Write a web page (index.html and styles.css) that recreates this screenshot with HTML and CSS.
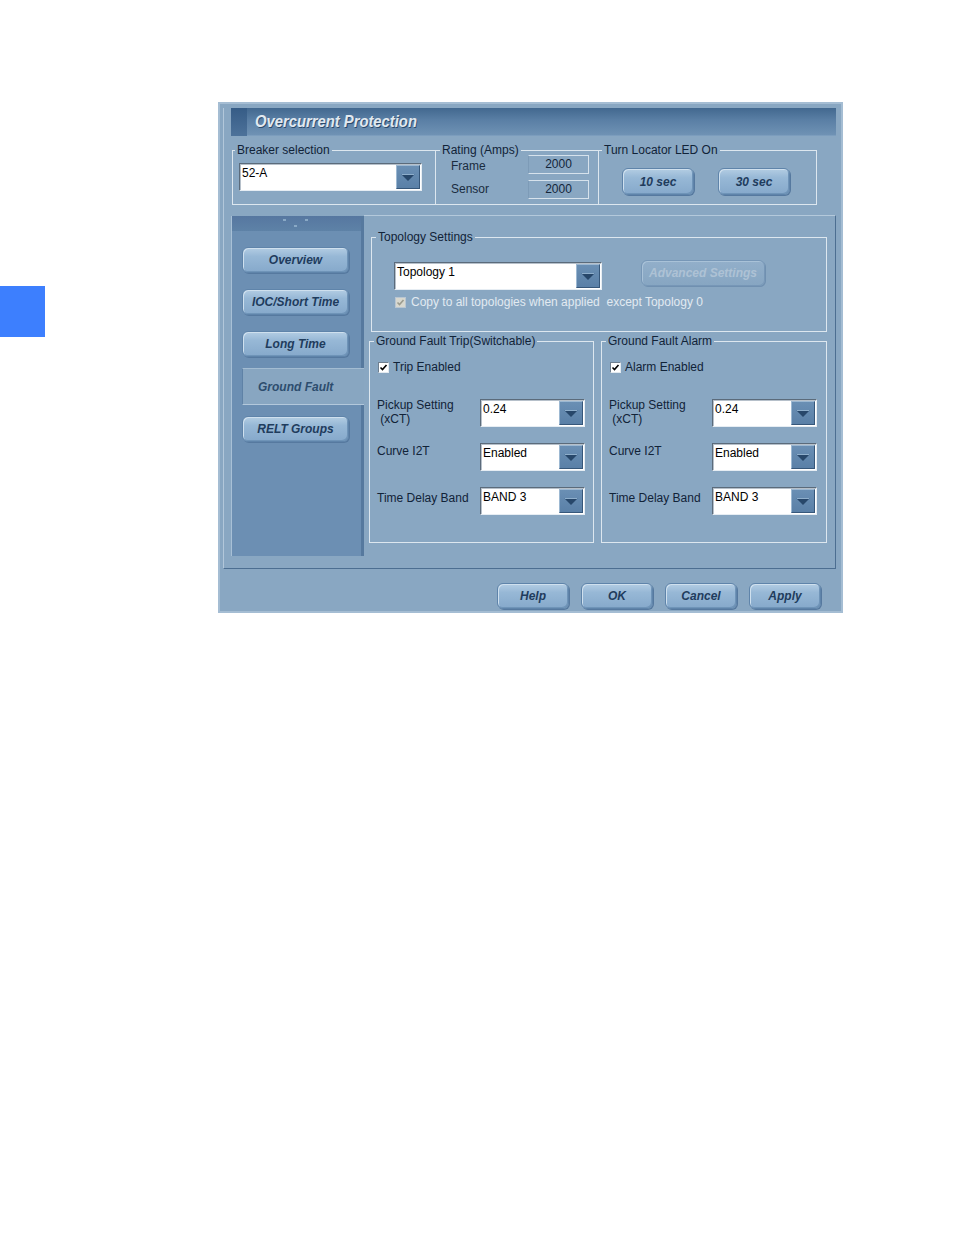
FILE: index.html
```html
<!DOCTYPE html>
<html>
<head>
<meta charset="utf-8">
<title>Overcurrent Protection</title>
<link rel="stylesheet" href="styles.css">
</head>
<body>
<div class="page">
  <div class="side-tab"></div>
  <div class="window">
    <div class="inner">
      <div class="titlebar">
        <span class="title-square"></span>
        <span class="title-text">Overcurrent Protection</span>
      </div>

      <div class="top">
        <fieldset class="grp grp-breaker">
          <legend>Breaker selection</legend>
          <div class="grp-body breaker-body">
            <div class="combo combo-breaker">
              <span class="combo-text">52-A</span>
              <span class="drop"><svg width="22" height="22" viewBox="0 0 22 22"><path d="M4.5 8.5 H17.5 L11 15 Z" fill="#27476a"/><path d="M5 8.5 H17" stroke="#8eaecb" stroke-width="1"/></svg></span>
            </div>
          </div>
        </fieldset>
        <fieldset class="grp grp-rating">
          <legend>Rating (Amps)</legend>
          <div class="grp-body rating-body">
            <span class="rlabel rlabel-1">Frame</span><span class="rvalue">2000</span>
            <span class="rlabel rlabel-2">Sensor</span><span class="rvalue">2000</span>
          </div>
        </fieldset>
        <fieldset class="grp grp-led">
          <legend>Turn Locator LED On</legend>
          <div class="grp-body led-body">
            <button class="btn">10 sec</button>
            <button class="btn">30 sec</button>
          </div>
        </fieldset>
      </div>

      <div class="body">
        <nav class="nav">
          <div class="nav-grip"><svg width="130" height="15" viewBox="0 0 130 15"><rect x="51" y="3" width="3" height="2" fill="#89a9c6"/><rect x="73" y="3" width="3" height="2" fill="#89a9c6"/><rect x="62" y="9" width="3" height="2" fill="#89a9c6"/></svg></div>
          <div class="nav-list">
            <button class="navbtn">Overview</button>
            <button class="navbtn">IOC/Short Time</button>
            <button class="navbtn">Long Time</button>
            <div class="navtab">Ground Fault</div>
            <button class="navbtn">RELT Groups</button>
          </div>
        </nav>

        <div class="content">
          <fieldset class="grp grp-topo">
            <legend>Topology Settings</legend>
            <div class="topo-body">
              <div class="topo-row">
                <div class="combo combo-topo">
                  <span class="combo-text">Topology 1</span>
                  <span class="drop"><svg width="22" height="22" viewBox="0 0 22 22"><path d="M4.5 8.5 H17.5 L11 15 Z" fill="#27476a"/><path d="M5 8.5 H17" stroke="#8eaecb" stroke-width="1"/></svg></span>
                </div>
                <button class="btn btn-adv" disabled>Advanced Settings</button>
              </div>
              <div class="chk chk-disabled">
                <span class="box"><svg width="9" height="9" viewBox="0 0 9 9"><path d="M1.5 4.5 L3.5 6.5 L7.5 2" fill="none" stroke="#9b9b8e" stroke-width="1.6"/></svg></span>
                <span class="chk-label">Copy to all topologies when applied&nbsp; except Topology 0</span>
              </div>
            </div>
          </fieldset>

          <div class="gf-row">
            <fieldset class="grp grp-gf grp-trip">
              <legend>Ground Fault Trip(Switchable)</legend>
              <div class="gf-body">
                <div class="chk">
                  <span class="box"><svg width="9" height="9" viewBox="0 0 9 9"><path d="M1.5 4.5 L3.5 6.5 L7.5 2" fill="none" stroke="#000" stroke-width="1.6"/></svg></span>
                  <span class="chk-label">Trip Enabled</span>
                </div>
                <div class="gf-grid">
                  <span class="gf-label gf-l1">Pickup Setting<br>&nbsp;(xCT)</span>
                  <div class="combo combo-gf"><span class="combo-text">0.24</span><span class="drop"><svg width="22" height="22" viewBox="0 0 22 22"><path d="M4.5 8.5 H17.5 L11 15 Z" fill="#27476a"/><path d="M5 8.5 H17" stroke="#8eaecb" stroke-width="1"/></svg></span></div>
                  <span class="gf-label gf-l2">Curve I2T</span>
                  <div class="combo combo-gf"><span class="combo-text">Enabled</span><span class="drop"><svg width="22" height="22" viewBox="0 0 22 22"><path d="M4.5 8.5 H17.5 L11 15 Z" fill="#27476a"/><path d="M5 8.5 H17" stroke="#8eaecb" stroke-width="1"/></svg></span></div>
                  <span class="gf-label gf-l3">Time Delay Band</span>
                  <div class="combo combo-gf"><span class="combo-text">BAND 3</span><span class="drop"><svg width="22" height="22" viewBox="0 0 22 22"><path d="M4.5 8.5 H17.5 L11 15 Z" fill="#27476a"/><path d="M5 8.5 H17" stroke="#8eaecb" stroke-width="1"/></svg></span></div>
                </div>
              </div>
            </fieldset>
            <fieldset class="grp grp-gf grp-alarm">
              <legend>Ground Fault Alarm</legend>
              <div class="gf-body">
                <div class="chk">
                  <span class="box"><svg width="9" height="9" viewBox="0 0 9 9"><path d="M1.5 4.5 L3.5 6.5 L7.5 2" fill="none" stroke="#000" stroke-width="1.6"/></svg></span>
                  <span class="chk-label">Alarm Enabled</span>
                </div>
                <div class="gf-grid">
                  <span class="gf-label gf-l1">Pickup Setting<br>&nbsp;(xCT)</span>
                  <div class="combo combo-gf"><span class="combo-text">0.24</span><span class="drop"><svg width="22" height="22" viewBox="0 0 22 22"><path d="M4.5 8.5 H17.5 L11 15 Z" fill="#27476a"/><path d="M5 8.5 H17" stroke="#8eaecb" stroke-width="1"/></svg></span></div>
                  <span class="gf-label gf-l2">Curve I2T</span>
                  <div class="combo combo-gf"><span class="combo-text">Enabled</span><span class="drop"><svg width="22" height="22" viewBox="0 0 22 22"><path d="M4.5 8.5 H17.5 L11 15 Z" fill="#27476a"/><path d="M5 8.5 H17" stroke="#8eaecb" stroke-width="1"/></svg></span></div>
                  <span class="gf-label gf-l3">Time Delay Band</span>
                  <div class="combo combo-gf"><span class="combo-text">BAND 3</span><span class="drop"><svg width="22" height="22" viewBox="0 0 22 22"><path d="M4.5 8.5 H17.5 L11 15 Z" fill="#27476a"/><path d="M5 8.5 H17" stroke="#8eaecb" stroke-width="1"/></svg></span></div>
                </div>
              </div>
            </fieldset>
          </div>
        </div>
      </div>
    </div>

    <div class="footer">
      <button class="btn">Help</button>
      <button class="btn">OK</button>
      <button class="btn">Cancel</button>
      <button class="btn">Apply</button>
    </div>
  </div>
</div>
</body>
</html>
```

FILE: styles.css
```css
* { box-sizing: border-box; }

html, body {
  margin: 0;
  padding: 0;
  background: #ffffff;
}

body {
  font-family: "Liberation Sans", Arial, sans-serif;
  font-size: 12px;
  color: #112338;
}

.page {
  display: flex;
  align-items: flex-start;
  width: 954px;
  height: 1235px;
}

.side-tab {
  flex: none;
  width: 45px;
  height: 51px;
  margin-top: 286px;
  background: #3d7ffe;
}

.window {
  flex: none;
  margin-left: 173px;
  margin-top: 102px;
  width: 625px;
  height: 511px;
  background: #89a7c2;
  border: 2px solid #a5bdd3;
  padding: 4px 5px 0 3px;
  display: flex;
  flex-direction: column;
}

.inner {
  width: 613px;
  height: 461px;
  border-left: 1px solid #b2c7da;
  border-bottom: 1px solid #4c6e91;
  padding-left: 7px;
  display: flex;
  flex-direction: column;
}

/* title bar */
.titlebar {
  height: 28px;
  width: 605px;
  display: flex;
  align-items: center;
  background: linear-gradient(to bottom, #42688f 0%, #5a7fa5 45%, #6f92b4 100%);
  border-bottom: 1px solid #7c9dbd;
}

.title-square {
  width: 16px;
  height: 28px;
  background: linear-gradient(to bottom, #365c86, #4d729a);
  flex: none;
}

.title-text {
  display: inline-block;
  margin-left: 8px;
  font-size: 17px;
  font-weight: bold;
  font-style: italic;
  color: #e1e9f0;
  text-shadow: 1px 1px 0 #2b4a6b;
  transform: scaleX(0.87);
  transform-origin: left center;
  white-space: nowrap;
}

/* group boxes */
.grp {
  margin: 0;
  padding: 0;
  border: 1px solid #dde7ef;
  min-width: 0;
}

.grp legend {
  padding: 0 2px;
  margin-left: 4px;
  line-height: 14px;
  font-size: 12px;
  color: #112338;
  white-space: nowrap;
}

.top {
  height: 79px;
  display: flex;
  align-items: flex-start;
  padding-top: 7px;
  padding-left: 1px;
}

.grp-breaker { width: 204px; }
.grp-breaker legend { margin-left: 2px; }
.grp-rating { width: 164px; margin-left: -1px; }
.grp-led { width: 219px; margin-left: -1px; }
.grp-led legend { margin-left: 3px; }

.grp-body { height: 47px; }

.breaker-body {
  padding: 6px 0 0 6px;
}

.rating-body {
  display: grid;
  grid-template-columns: 77px 61px;
  grid-template-rows: 19px 19px;
  row-gap: 6px;
  align-items: center;
  margin-top: -2px;
  padding-left: 15px;
  height: 49px;
}

.rlabel {
  font-size: 12px;
  color: #1a2c3f;
}

.rlabel-1 { padding-top: 3px; }
.rlabel-2 { padding-bottom: 2px; }

.rvalue {
  height: 19px;
  line-height: 17px;
  text-align: center;
  font-size: 12px;
  color: #13263a;
  border-top: 1px solid #d6e2ec;
  border-right: 1px solid #d6e2ec;
  border-bottom: 1px solid #d6e2ec;
  border-left: 1px solid #7d9bb7;
}

.led-body {
  display: flex;
  gap: 24px;
  padding: 11px 0 0 23px;
}

/* combos */
.combo {
  display: flex;
  align-items: flex-start;
  justify-content: space-between;
  background: #ffffff;
  border-top: 1px solid #5b6b7b;
  border-left: 1px solid #5b6b7b;
  border-right: 1px solid #e6edf3;
  border-bottom: 1px solid #e6edf3;
  box-shadow: inset 1px 1px 0 #b6c0ca;
  height: 28px;
}

.combo-text {
  padding: 2px 0 0 2px;
  font-size: 12px;
  line-height: 14px;
  color: #000;
  white-space: nowrap;
}

.drop {
  flex: none;
  width: 24px;
  height: 24px;
  margin: 1px 1px 0 0;
  background: linear-gradient(to bottom, #6a8fb4, #5a80a7);
  border-top: 1px solid #9cb8d2;
  border-left: 1px solid #9cb8d2;
  border-right: 1px solid #36577a;
  border-bottom: 1px solid #36577a;
  display: flex;
  align-items: center;
  justify-content: center;
}

.drop svg { display: block; }

.combo-breaker { width: 183px; }
.combo-topo { width: 208px; }
.combo-gf { width: 105px; }

/* buttons */
.btn, .navbtn {
  font-family: "Liberation Sans", Arial, sans-serif;
  font-size: 12px;
  font-weight: bold;
  font-style: italic;
  color: #1f3c5d;
  background: linear-gradient(to bottom, #b3cde3 0%, #97b8d6 35%, #86a9cb 100%);
  border: 1px solid #5f84aa;
  border-radius: 6px;
  box-shadow: inset 1px 1px 0 #cfe0ee, inset -1px -1px 0 #6f94b8, 1px 1px 0 #56799f;
  padding: 0;
  cursor: default;
}

.btn {
  width: 72px;
  height: 27px;
}

.footer .btn { height: 26px; }

.btn-adv {
  width: 124px;
  height: 26px;
  margin-left: 39px;
  margin-top: -2px;
  color: #aec2d5;
  background: linear-gradient(to bottom, #92afca 0%, #87a6c2 100%);
  border: 1px solid #7797b7;
  box-shadow: inset 1px 1px 0 #a9c2d8, 1px 1px 0 #7090b0;
}

/* nav */
.body {
  height: 353px;
  display: flex;
  align-items: flex-start;
}

.nav {
  flex: none;
  width: 133px;
  height: 340px;
  margin-top: 1px;
  background: #6c8fb3;
  border-left: 1px solid #a8c0d6;
  box-shadow: inset -3px 0 0 #56799e;
  display: flex;
  flex-direction: column;
}

.nav-grip {
  height: 15px;
  background: linear-gradient(to bottom, #5677a0, #5e82a7);
  margin-right: 3px;
}

.nav-grip svg { display: block; }

.nav-list {
  display: flex;
  flex-direction: column;
  align-items: flex-start;
  gap: 16px;
  padding: 16px 0 0 10px;
}

.navbtn {
  width: 107px;
  height: 26px;
}

.navtab {
  width: 122px;
  height: 37px;
  margin: -5px 0;
  padding-left: 15px;
  display: flex;
  align-items: center;
  font-size: 12px;
  font-weight: bold;
  font-style: italic;
  color: #2d4d6e;
  background: #88a6c1;
  border-top: 1px solid #a3bcd2;
  border-left: 1px solid #5f82a6;
  border-bottom: 1px solid #b3c8db;
}

/* content */
.content {
  flex: none;
  width: 472px;
  height: 353px;
  border-top: 1px solid #b4c9db;
  border-right: 1px solid #4c6e91;
  padding-top: 14px;
}

.grp-topo {
  width: 456px;
  margin-left: 7px;
}

.topo-body {
  height: 87px;
  padding: 18px 0 0 22px;
}

.topo-row {
  display: flex;
  align-items: flex-start;
}

.chk {
  display: flex;
  align-items: center;
  gap: 5px;
}

.box {
  flex: none;
  width: 11px;
  height: 11px;
  background: #ffffff;
  border-top: 1px solid #6f7f8f;
  border-left: 1px solid #6f7f8f;
  border-right: 1px solid #e3eaf0;
  border-bottom: 1px solid #e3eaf0;
  display: flex;
  align-items: center;
  justify-content: center;
}

.box svg { display: block; }

.chk-label {
  font-size: 12px;
  line-height: 13px;
  color: #112338;
  white-space: nowrap;
}

.chk-disabled {
  margin-top: 6px;
  margin-left: 1px;
}

.chk-disabled .box {
  background: #d8d8cf;
  border-color: #b9c6d2;
}

.chk-disabled .chk-label {
  color: #e2eaf1;
}

.gf-row {
  display: flex;
  align-items: flex-start;
  gap: 7px;
  margin-top: 2px;
  margin-left: 5px;
}

.grp-trip { width: 225px; }
.grp-alarm { width: 226px; }

.gf-body {
  height: 194px;
  padding: 13px 0 0 8px;
}

.gf-body .chk { gap: 4px; }

.gf-grid {
  display: grid;
  grid-template-columns: 103px 105px;
  grid-auto-rows: 28px;
  row-gap: 16px;
  align-items: start;
  margin-top: 25px;
  margin-left: -1px;
}

.gf-label {
  font-size: 12px;
  line-height: 14px;
  color: #112338;
  white-space: nowrap;
}

.gf-l1 { margin-top: -1px; }
.gf-l2 { padding-top: 1px; }
.gf-l3 { padding-top: 4px; }

/* footer */
.footer {
  display: flex;
  justify-content: flex-end;
  gap: 12px;
  padding: 14px 15px 0 0;
}
```
